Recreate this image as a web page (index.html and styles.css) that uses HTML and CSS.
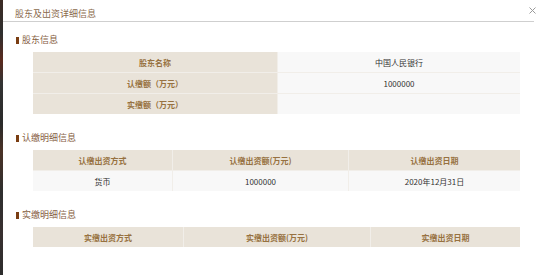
FILE: index.html
```html
<!DOCTYPE html>
<html lang="zh-CN">
<head>
<meta charset="utf-8">
<title>股东及出资详细信息</title>
<link rel="stylesheet" href="styles.css">
</head>
<body>
<div class="page">
  <div class="backdrop"></div>
  <div class="modal">
    <div class="modal-header">
      <span class="modal-title">股东及出资详细信息</span>
      <span class="close" aria-label="关闭">
        <svg width="7" height="7" viewBox="0 0 7 7"><path d="M0.5 0.5L6.5 6.5M6.5 0.5L0.5 6.5" stroke="#9a9a9a" stroke-width="1" fill="none"/></svg>
      </span>
    </div>
    <div class="modal-body">
      <section class="section">
        <h3 class="section-title"><i class="bar"></i>股东信息</h3>
        <table class="grid kv">
          <tr><th>股东名称</th><td>中国人民银行</td></tr>
          <tr><th>认缴额（万元）</th><td>1000000</td></tr>
          <tr><th>实缴额（万元）</th><td></td></tr>
        </table>
      </section>
      <section class="section">
        <h3 class="section-title"><i class="bar"></i>认缴明细信息</h3>
        <table class="grid list sub">
          <tr><th class="c1">认缴出资方式</th><th class="c2">认缴出资额(万元)</th><th>认缴出资日期</th></tr>
          <tr><td>货币</td><td>1000000</td><td>2020年12月31日</td></tr>
        </table>
      </section>
      <section class="section">
        <h3 class="section-title"><i class="bar"></i>实缴明细信息</h3>
        <table class="grid list paid">
          <tr><th class="c1">实缴出资方式</th><th class="c2">实缴出资额(万元)</th><th>实缴出资日期</th></tr>
        </table>
      </section>
    </div>
  </div>
</div>
</body>
</html>
```
FILE: styles.css
```css
html, body {
  margin: 0;
  padding: 0;
  background: #ffffff;
}
body {
  font-family: "Noto Sans CJK SC", "Noto Sans", sans-serif;
  width: 550px;
  height: 275px;
  overflow: hidden;
}
.page {
  display: flex;
  height: 275px;
}
.backdrop {
  width: 3px;
  flex: none;
  background: linear-gradient(180deg, #3b2b24 0%, #2f2f2f 12%, #5a2a1e 22%, #333 30%, #2a2a2a 45%, #4a3226 55%, #2e2e2e 70%, #383030 85%, #2c2c2c 100%);
}
.modal {
  width: 531px;
  flex: none;
  background: #ffffff;
}
.modal-header {
  position: relative;
  height: 21px;
  line-height: 21px;
  padding-left: 12px;
  border-bottom: 1px solid #cfcfcf;
}
.modal-title {
  font-size: 9px;
  color: #8a6a4c;
}
.close {
  position: absolute;
  right: -2px;
  top: 7px;
  width: 7px;
  height: 7px;
  display: block;
  line-height: 0;
}
.modal-body {
  padding: 11px 0 0 13px;
}
.section + .section {
  margin-top: 17px;
}
.section-title {
  display: flex;
  align-items: center;
  gap: 3px;
  height: 14px;
  line-height: 14px;
  margin: 0 0 5px 0;
  font-size: 9px;
  font-weight: normal;
  color: #86603f;
}
.bar {
  display: block;
  width: 3px;
  height: 7px;
  background: #7a3d12;
}
.grid {
  margin-left: 17px;
  width: 487px;
  border-collapse: collapse;
  table-layout: fixed;
  font-size: 8px;
}
.grid th, .grid td {
  height: 20px;
  padding: 0;
  text-align: center;
  border: 1px solid #f1eee9;
}
.grid tr:first-child th, .grid tr:first-child td {
  border-top: none;
}
.grid tr:last-child th, .grid tr:last-child td {
  border-bottom: none;
}
.grid th:first-child, .grid td:first-child {
  border-left: none;
}
.grid th:last-child, .grid td:last-child {
  border-right: none;
}
.grid th {
  background: #e9e3d9;
  color: #977140;
  font-weight: bold;
}
.grid td {
  background: #f8f8f8;
  color: #333333;
  font-weight: normal;
}
.kv th {
  width: 244px;
}
.sub .c1 { width: 139px; }
.sub .c2 { width: 175px; }
.paid .c1 { width: 150px; }
.paid .c2 { width: 186px; }
```
